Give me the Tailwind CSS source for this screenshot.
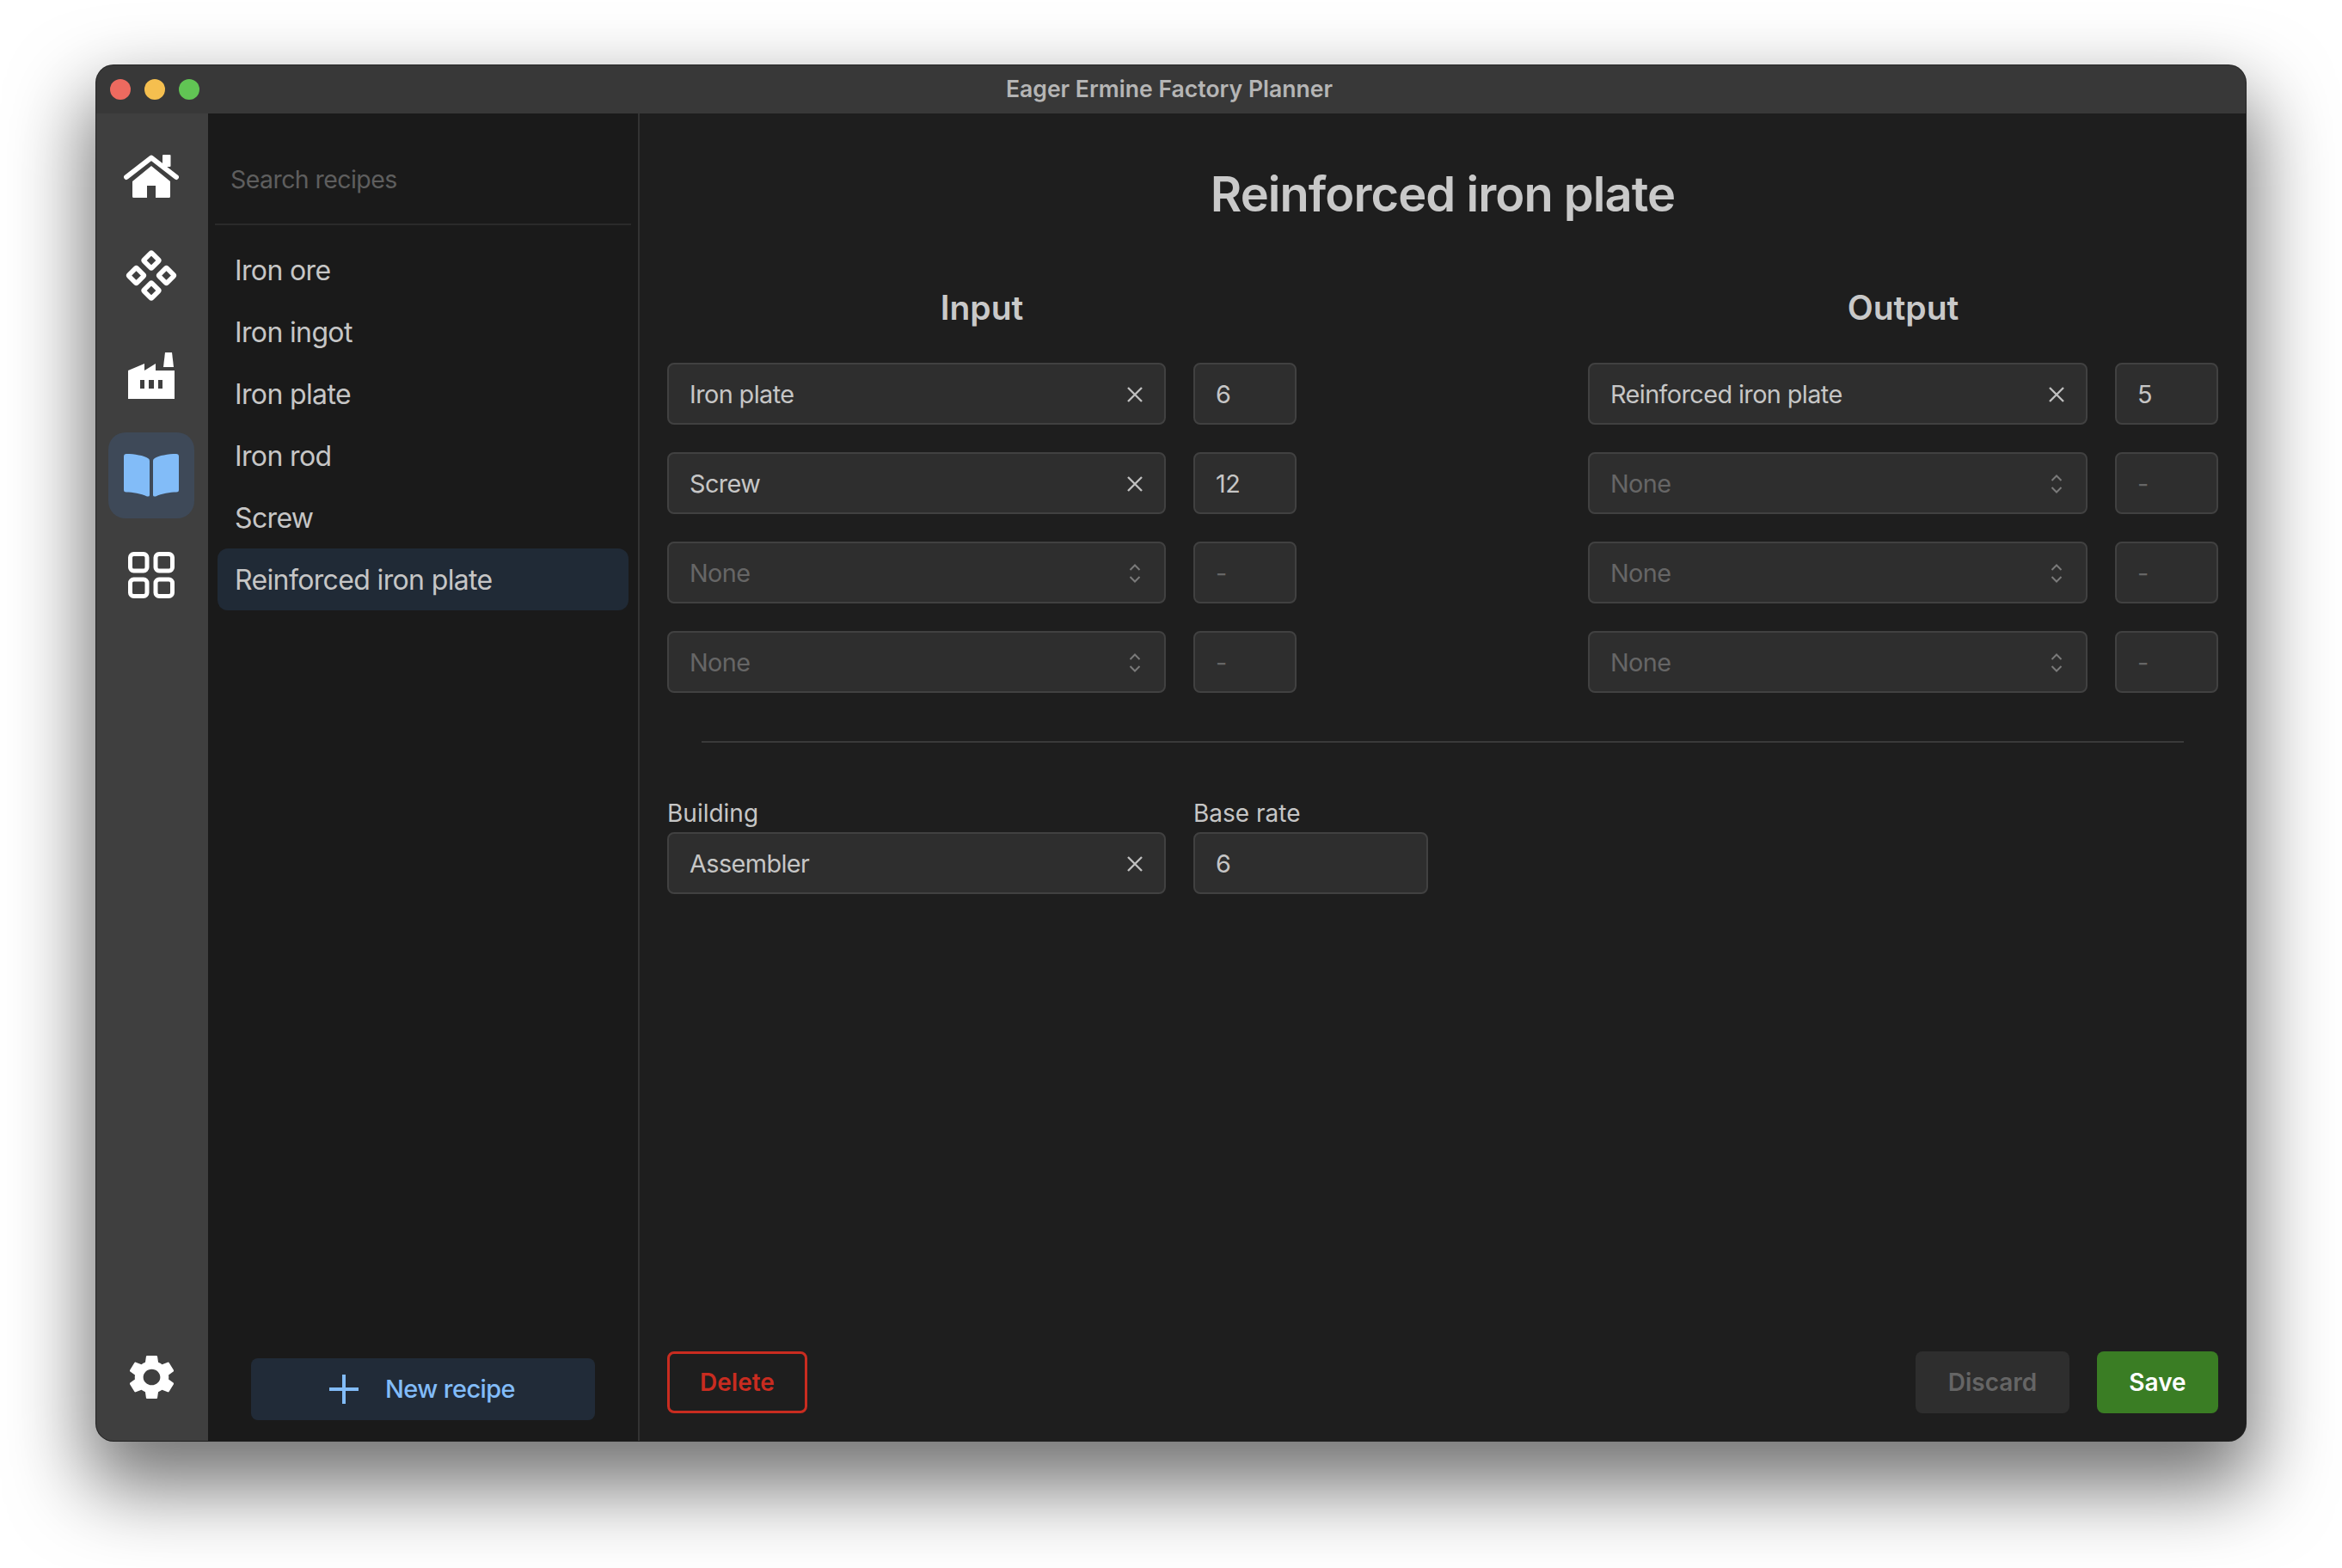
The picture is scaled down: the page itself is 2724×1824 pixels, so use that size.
<!doctype html>
<html>
<head>
<meta charset="utf-8">
<script src="https://cdn.jsdelivr.net/npm/@tailwindcss/browser@4"></script>
</head>
<body class="bg-white font-['Inter',sans-serif]">
<div class="w-[2724px] h-[1824px] pt-[76px] pl-[112px] overflow-hidden">
  <div class="w-[2500px] h-[1600px] rounded-[20px] overflow-hidden flex flex-col bg-[#1e1e1e] shadow-[0_0_0_1px_rgba(20,20,20,0.9),0_44px_90px_10px_rgba(0,0,0,0.55)]">
    <header class="relative h-[56px] shrink-0 bg-[#383838] flex items-center justify-center pr-[4px]">
      <div class="absolute left-[16px] top-[16px] flex gap-4">
        <span class="w-6 h-6 rounded-full bg-[#ee6a5f]"></span>
        <span class="w-6 h-6 rounded-full bg-[#f5bf4f]"></span>
        <span class="w-6 h-6 rounded-full bg-[#61c554]"></span>
      </div>
      <span class="text-[26.6px] font-semibold text-[#b5b5b5]">Eager Ermine Factory Planner</span>
    </header>
    <div class="flex flex-1 min-h-0">
      <nav class="w-[130px] shrink-0 bg-[#3f3f3f] flex flex-col items-center pt-[23px] pb-[24px] pr-[2px] gap-4">
        <div class="w-[100px] h-[100px] flex items-center justify-center">
          <svg width="64" height="50" viewBox="0 0 64 50" fill="#fff"><path d="M3 26 L32 3.5 L61 26" fill="none" stroke="#fff" stroke-width="6" stroke-linecap="round" stroke-linejoin="round"/><rect x="45" y="0" width="9.5" height="14" rx="1"/><path d="M32 13 L54 31 V48.5 a1.5 1.5 0 0 1 -1.5 1.5 H37 V36 H27 V50 H11.5 a1.5 1.5 0 0 1 -1.5 -1.5 V31 Z"/></svg>
        </div>
        <div class="w-[100px] h-[100px] flex items-center justify-center">
          <svg class="overflow-visible" width="58" height="60" viewBox="0 0 58 60" fill="none" stroke="#fff" stroke-width="5.5" stroke-linejoin="round"><rect x="22.5" y="5.5" width="13" height="13" rx="1" transform="rotate(45 29 12)"/><rect x="5" y="23" width="13" height="13" rx="1" transform="rotate(45 11.5 29.5)"/><rect x="40" y="23" width="13" height="13" rx="1" transform="rotate(45 46.5 29.5)"/><rect x="22.5" y="40.5" width="13" height="13" rx="1" transform="rotate(45 29 47)"/></svg>
        </div>
        <div class="w-[100px] h-[100px] flex items-center justify-center">
          <svg width="54" height="54" viewBox="0 0 54 54" fill="#fff"><path d="M43 0 H51 L53 17 H41 Z"/><path fill-rule="evenodd" d="M0 21 L19 13 V21 L32 13 V21 H54 V54 H0 Z M14 32 V42 H19 V32 Z M24 32 V42 H30 V32 Z M35 32 V42 H40 V32 Z"/></svg>
        </div>
        <div class="w-[100px] h-[100px] rounded-[20px] bg-[#3e4958] flex items-center justify-center">
          <svg width="64" height="50" viewBox="0 0 64 50" fill="#82bcf8"><path d="M3 0 C12 0 24 2 28 5 Q30 6 30 8 V48 Q30 50 27 49.5 C20 46 10 44.5 3 44.5 Q0 44.5 0 42 V3 Q0 0 3 0 Z"/><path d="M61 0 C52 0 40 2 36 5 Q34 6 34 8 V48 Q34 50 37 49.5 C44 46 54 44.5 61 44.5 Q64 44.5 64 42 V3 Q64 0 61 0 Z"/></svg>
        </div>
        <div class="w-[100px] h-[100px] flex items-center justify-center">
          <svg width="54" height="54" viewBox="0 0 54 54" fill="none" stroke="#fff" stroke-width="5"><rect x="2.5" y="2.5" width="19.5" height="19.5" rx="4"/><rect x="32" y="2.5" width="19.5" height="19.5" rx="4"/><rect x="2.5" y="32" width="19.5" height="19.5" rx="4"/><rect x="32" y="32" width="19.5" height="19.5" rx="4"/></svg>
        </div>
        <div class="mt-auto w-[100px] h-[100px] flex items-center justify-center">
          <svg width="51" height="52" viewBox="2.7 2 18.6 20" preserveAspectRatio="none" fill="#fff"><path d="M19.14 12.94c.04-.3.06-.61.06-.94 0-.32-.02-.64-.07-.94l2.03-1.58a.49.49 0 0 0 .12-.61l-1.92-3.32a.488.488 0 0 0-.59-.22l-2.39.96c-.5-.38-1.03-.7-1.62-.94l-.36-2.54a.484.484 0 0 0-.48-.41h-3.84c-.24 0-.43.17-.47.41l-.36 2.54c-.59.24-1.13.57-1.62.94l-2.39-.96c-.22-.08-.47 0-.59.22L2.74 8.87c-.12.21-.08.47.12.61l2.03 1.58c-.05.3-.09.63-.09.94s.02.64.07.94l-2.03 1.58a.49.49 0 0 0-.12.61l1.92 3.32c.12.22.37.29.59.22l2.39-.96c.5.38 1.03.7 1.62.94l.36 2.54c.05.24.24.41.48.41h3.84c.24 0 .44-.17.47-.41l.36-2.54c.59-.24 1.13-.56 1.62-.94l2.39.96c.22.08.47 0 .59-.22l1.92-3.32c.12-.22.07-.47-.12-.61l-2.01-1.58zM12 15.6c-1.98 0-3.6-1.62-3.6-3.6s1.62-3.6 3.6-3.6 3.6 1.62 3.6 3.6-1.62 3.6-3.6 3.6z"/></svg>
        </div>
      </nav>

      <aside class="w-[502px] shrink-0 bg-[#1a1a1a] border-r-2 border-[#333333] flex flex-col items-stretch pb-[24px]">
        <div class="mx-2 h-[130px] shrink-0 border-b-2 border-[#2a2a2a] flex items-center pl-[18px] pt-[26px] text-[28.5px] tracking-[-0.02em] text-[#5e5e5e]">Search recipes</div>
        <ul class="mt-[16px] mx-[11px] text-[32px] tracking-[-0.02em] text-[#c6c6c6]">
          <li class="h-[72px] px-[20px] pt-[2px] flex items-center rounded-xl">Iron ore</li>
          <li class="h-[72px] px-[20px] pt-[2px] flex items-center rounded-xl">Iron ingot</li>
          <li class="h-[72px] px-[20px] pt-[2px] flex items-center rounded-xl">Iron plate</li>
          <li class="h-[72px] px-[20px] pt-[2px] flex items-center rounded-xl">Iron rod</li>
          <li class="h-[72px] px-[20px] pt-[2px] flex items-center rounded-xl">Screw</li>
          <li class="h-[72px] px-[20px] pt-[2px] flex items-center rounded-xl bg-[#202a36]">Reinforced iron plate</li>
        </ul>
        <button class="mt-auto mx-auto w-[400px] h-[72px] rounded-lg bg-[#212b38] flex items-center justify-center gap-[31px] pr-[2px] text-[29px] font-medium tracking-[-0.02em] text-[#82bcf8]">
          <svg width="34" height="34" viewBox="0 0 34 34" stroke="#82bcf8" stroke-width="4"><path d="M17 0 V34 M0 17 H34"/></svg>
          <span>New recipe</span>
        </button>
      </aside>

      <main class="flex-1 min-w-0 px-[32px] pb-[32px] flex flex-col text-[#c6c6c6]">
        <h1 class="mt-[60px] h-[68px] flex items-center justify-center text-[56px] font-semibold tracking-[-0.017em] text-[#c9c9c9]">Reinforced iron plate</h1>

        <div class="mt-[74px] flex justify-between">
          <section class="w-[732px]">
            <h2 class="h-[48px] flex items-center justify-center text-[39px] font-semibold text-[#c9c9c9]">Input</h2>
            <div class="mt-[40px] flex flex-col gap-[32px] text-[28.8px] tracking-[-0.02em]">
              <div class="flex gap-[32px]">
                <div class="w-[580px] h-[72px] rounded-lg border-2 border-[#414141] bg-[#2e2e2e] pl-[24px] pr-[25px] pt-[1px] flex items-center justify-between"><span>Iron plate</span><svg width="18" height="18" viewBox="0 0 18 18" stroke="#c0c0c0" stroke-width="2.4"><path d="M1 1 L17 17 M17 1 L1 17"/></svg></div>
                <div class="w-[120px] h-[72px] rounded-lg border-2 border-[#414141] bg-[#2e2e2e] pl-[24px] pt-[1px] flex items-center">6</div>
              </div>
              <div class="flex gap-[32px]">
                <div class="w-[580px] h-[72px] rounded-lg border-2 border-[#414141] bg-[#2e2e2e] pl-[24px] pr-[25px] pt-[1px] flex items-center justify-between"><span>Screw</span><svg width="18" height="18" viewBox="0 0 18 18" stroke="#c0c0c0" stroke-width="2.4"><path d="M1 1 L17 17 M17 1 L1 17"/></svg></div>
                <div class="w-[120px] h-[72px] rounded-lg border-2 border-[#414141] bg-[#2e2e2e] pl-[24px] pt-[1px] flex items-center">12</div>
              </div>
              <div class="flex gap-[32px]">
                <div class="w-[580px] h-[72px] rounded-lg border-2 border-[#414141] bg-[#2e2e2e] pl-[24px] pr-[27px] pt-[1px] flex items-center justify-between text-[#666666]"><span>None</span><svg width="14" height="22" viewBox="0 0 14 22" fill="none" stroke="#7a7a7a" stroke-width="2"><path d="M1.5 7 L7 1.5 L12.5 7 M1.5 15 L7 20.5 L12.5 15"/></svg></div>
                <div class="w-[120px] h-[72px] rounded-lg border-2 border-[#414141] bg-[#2e2e2e] pl-[24px] pt-[1px] flex items-center text-[#666666]">-</div>
              </div>
              <div class="flex gap-[32px]">
                <div class="w-[580px] h-[72px] rounded-lg border-2 border-[#414141] bg-[#2e2e2e] pl-[24px] pr-[27px] pt-[1px] flex items-center justify-between text-[#666666]"><span>None</span><svg width="14" height="22" viewBox="0 0 14 22" fill="none" stroke="#7a7a7a" stroke-width="2"><path d="M1.5 7 L7 1.5 L12.5 7 M1.5 15 L7 20.5 L12.5 15"/></svg></div>
                <div class="w-[120px] h-[72px] rounded-lg border-2 border-[#414141] bg-[#2e2e2e] pl-[24px] pt-[1px] flex items-center text-[#666666]">-</div>
              </div>
            </div>
          </section>
          <section class="w-[733px]">
            <h2 class="h-[48px] flex items-center justify-center text-[39px] font-semibold text-[#c9c9c9]">Output</h2>
            <div class="mt-[40px] flex flex-col gap-[32px] text-[28.8px] tracking-[-0.02em]">
              <div class="flex gap-[32px]">
                <div class="w-[581px] h-[72px] rounded-lg border-2 border-[#414141] bg-[#2e2e2e] pl-[24px] pr-[25px] pt-[1px] flex items-center justify-between"><span>Reinforced iron plate</span><svg width="18" height="18" viewBox="0 0 18 18" stroke="#c0c0c0" stroke-width="2.4"><path d="M1 1 L17 17 M17 1 L1 17"/></svg></div>
                <div class="w-[120px] h-[72px] rounded-lg border-2 border-[#414141] bg-[#2e2e2e] pl-[24px] pt-[1px] flex items-center">5</div>
              </div>
              <div class="flex gap-[32px]">
                <div class="w-[581px] h-[72px] rounded-lg border-2 border-[#414141] bg-[#2e2e2e] pl-[24px] pr-[27px] pt-[1px] flex items-center justify-between text-[#666666]"><span>None</span><svg width="14" height="22" viewBox="0 0 14 22" fill="none" stroke="#7a7a7a" stroke-width="2"><path d="M1.5 7 L7 1.5 L12.5 7 M1.5 15 L7 20.5 L12.5 15"/></svg></div>
                <div class="w-[120px] h-[72px] rounded-lg border-2 border-[#414141] bg-[#2e2e2e] pl-[24px] pt-[1px] flex items-center text-[#666666]">-</div>
              </div>
              <div class="flex gap-[32px]">
                <div class="w-[581px] h-[72px] rounded-lg border-2 border-[#414141] bg-[#2e2e2e] pl-[24px] pr-[27px] pt-[1px] flex items-center justify-between text-[#666666]"><span>None</span><svg width="14" height="22" viewBox="0 0 14 22" fill="none" stroke="#7a7a7a" stroke-width="2"><path d="M1.5 7 L7 1.5 L12.5 7 M1.5 15 L7 20.5 L12.5 15"/></svg></div>
                <div class="w-[120px] h-[72px] rounded-lg border-2 border-[#414141] bg-[#2e2e2e] pl-[24px] pt-[1px] flex items-center text-[#666666]">-</div>
              </div>
              <div class="flex gap-[32px]">
                <div class="w-[581px] h-[72px] rounded-lg border-2 border-[#414141] bg-[#2e2e2e] pl-[24px] pr-[27px] pt-[1px] flex items-center justify-between text-[#666666]"><span>None</span><svg width="14" height="22" viewBox="0 0 14 22" fill="none" stroke="#7a7a7a" stroke-width="2"><path d="M1.5 7 L7 1.5 L12.5 7 M1.5 15 L7 20.5 L12.5 15"/></svg></div>
                <div class="w-[120px] h-[72px] rounded-lg border-2 border-[#414141] bg-[#2e2e2e] pl-[24px] pt-[1px] flex items-center text-[#666666]">-</div>
              </div>
            </div>
          </section>
        </div>

        <div class="mt-[56px] mx-[40px] h-[2px] bg-[#3a3a3a]"></div>

        <div class="mt-[64px] flex gap-[32px]">
          <label class="w-[580px]">
            <div class="h-[36px] mb-[4px] flex items-center text-[28px]">Building</div>
            <div class="h-[72px] rounded-lg border-2 border-[#414141] bg-[#2e2e2e] pl-[24px] pr-[25px] pt-[1px] flex items-center justify-between text-[28.8px] tracking-[-0.02em]"><span>Assembler</span><svg width="18" height="18" viewBox="0 0 18 18" stroke="#c0c0c0" stroke-width="2.4"><path d="M1 1 L17 17 M17 1 L1 17"/></svg></div>
          </label>
          <label class="w-[273px]">
            <div class="h-[36px] mb-[4px] flex items-center text-[28px]">Base rate</div>
            <div class="h-[72px] rounded-lg border-2 border-[#414141] bg-[#2e2e2e] pl-[24px] pt-[1px] flex items-center text-[28.8px]">6</div>
          </label>
        </div>

        <div class="mt-auto flex items-center">
          <button class="w-[163px] h-[72px] rounded-lg border-[3px] border-[#c92c20] text-[28px] font-semibold text-[#c92c20]">Delete</button>
          <button class="ml-auto w-[179px] h-[72px] rounded-lg bg-[#2e2e2e] text-[28px] font-semibold text-[#656565]">Discard</button>
          <button class="ml-[32px] w-[141px] h-[72px] rounded-lg bg-[#3a7d24] text-[28px] font-semibold text-white">Save</button>
        </div>
      </main>
    </div>
  </div>
</div>
</body>
</html>
